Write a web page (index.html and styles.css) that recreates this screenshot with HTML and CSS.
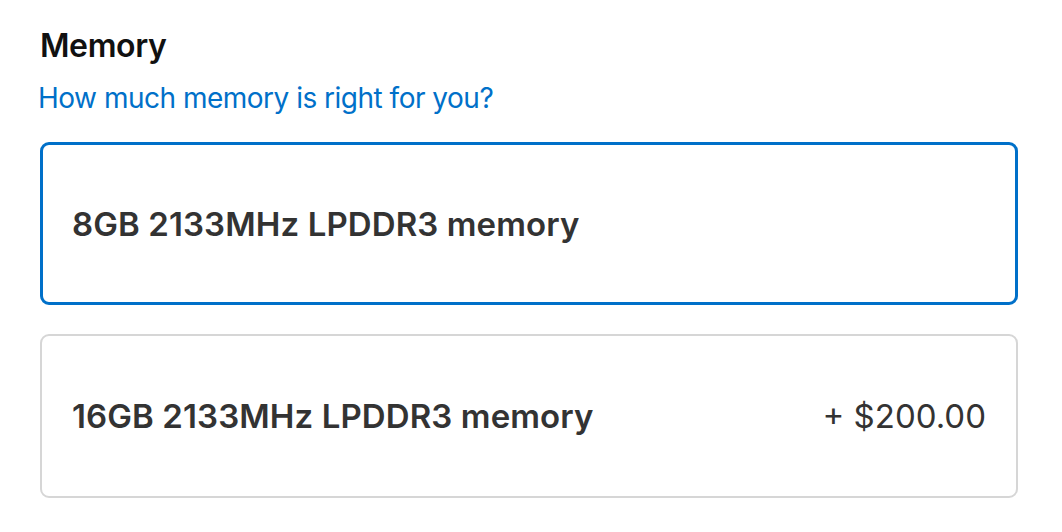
FILE: index.html
```html
<!DOCTYPE html>
<html lang="en">
<head>
  <meta charset="UTF-8">
  <meta name="viewport" content="width=device-width, initial-scale=1.0">
  <title>Memory</title>
  <link rel="stylesheet" href="styles.css">
</head>
<body>
  <div class="section">
    <h2 class="section-title">Memory</h2>
    <a class="help-link" href="#">How much memory is right for you?</a>
    <div class="options">
      <label class="option selected">
        <span class="option-name">8GB 2133MHz LPDDR3 memory</span>
      </label>
      <label class="option">
        <span class="option-name">16GB 2133MHz LPDDR3 memory</span>
        <span class="option-price">+ $200.00</span>
      </label>
    </div>
  </div>
</body>
</html>
```

FILE: styles.css
```css
body {
  margin: 0;
  font-family: 'Inter', 'Liberation Sans', sans-serif;
  background: #fff;
  color: #333;
}
.section {
  padding: 26px 44px 0 40px;
}
.section-title {
  margin: 0;
  font-size: 32px;
  line-height: 40px;
  font-weight: 600;
  color: #111;
  letter-spacing: -0.4px;
}
.help-link {
  display: block;
  margin-top: 12px;
  margin-left: -2px;
  font-size: 28px;
  line-height: 40px;
  letter-spacing: -0.5px;
  color: #0070c9;
  text-decoration: none;
}
.options {
  display: flex;
  flex-direction: column;
  gap: 29px;
  margin-top: 24px;
}
.option {
  display: flex;
  justify-content: space-between;
  align-items: center;
  height: 164px;
  box-sizing: border-box;
  padding: 0 30px;
  border: 2px solid #d6d6d6;
  border-radius: 9px;
  font-size: 33px;
  cursor: pointer;
}
.option.selected {
  height: 163px;
  border: 3px solid #0070c9;
  padding: 0 29px;
}
.option-name {
  font-weight: 600;
  color: #333;
  letter-spacing: 0.1px;
}
.option-price {
  font-weight: 400;
  color: #333;
}
```
